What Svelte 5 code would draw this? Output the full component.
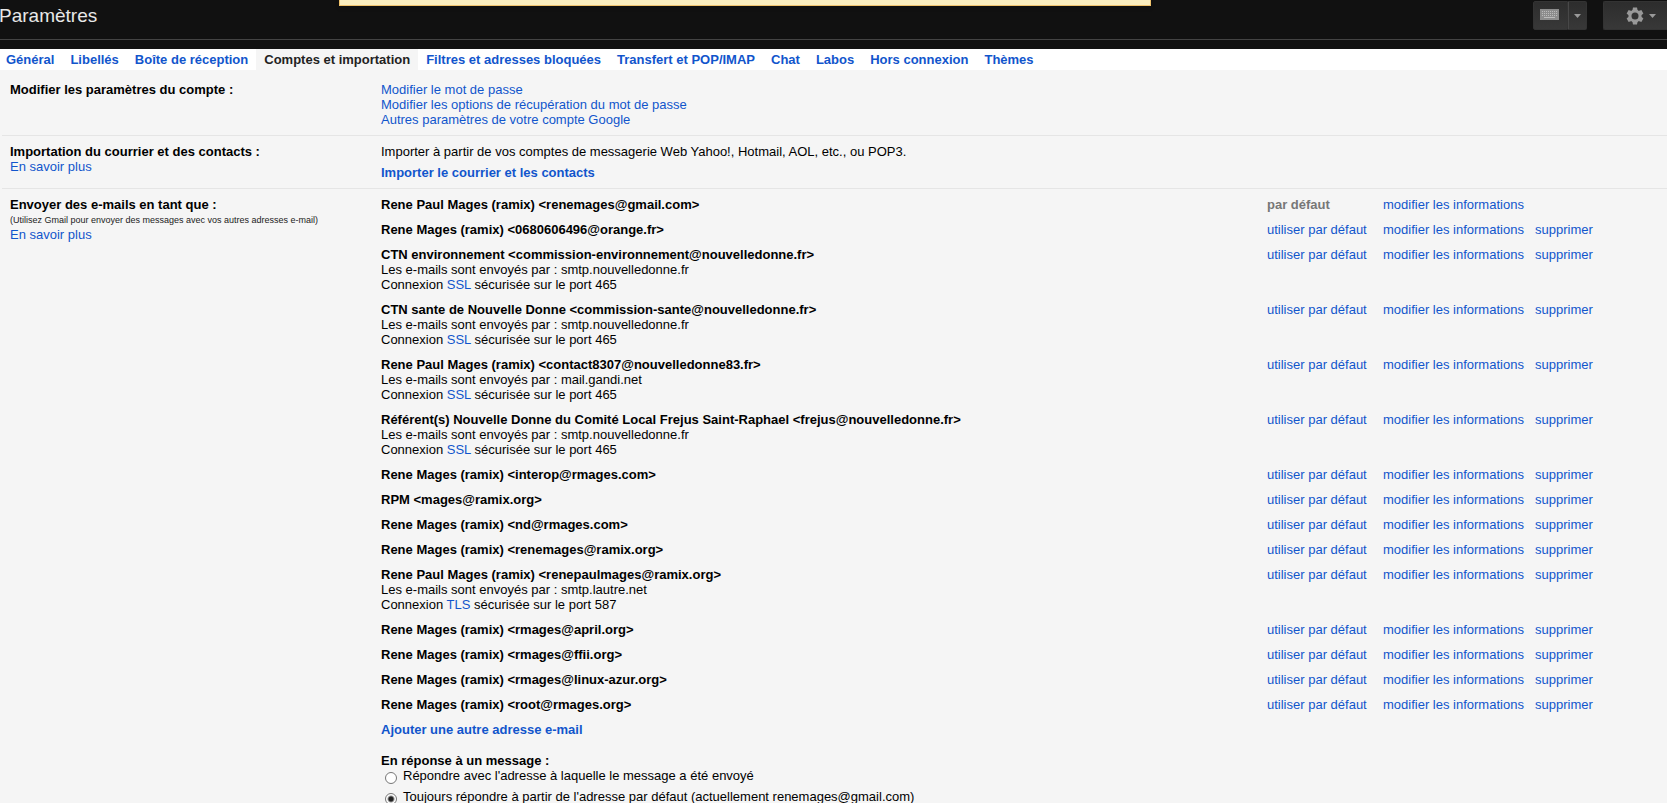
<script lang="ts">
  type Sender = { name: string; server?: string; security?: string; port?: number };

  const tabs = [
    'Général',
    'Libellés',
    'Boîte de réception',
    'Comptes et importation',
    'Filtres et adresses bloquées',
    'Transfert et POP/IMAP',
    'Chat',
    'Labos',
    'Hors connexion',
    'Thèmes',
  ];

  const senders: Sender[] = [
    { name: 'Rene Paul Mages (ramix) <renemages@gmail.com>' },
    { name: 'Rene Mages (ramix) <0680606496@orange.fr>' },
    { name: 'CTN environnement <commission-environnement@nouvelledonne.fr>', server: 'smtp.nouvelledonne.fr', security: 'SSL', port: 465 },
    { name: 'CTN sante de Nouvelle Donne <commission-sante@nouvelledonne.fr>', server: 'smtp.nouvelledonne.fr', security: 'SSL', port: 465 },
    { name: 'Rene Paul Mages (ramix) <contact8307@nouvelledonne83.fr>', server: 'mail.gandi.net', security: 'SSL', port: 465 },
    { name: 'Référent(s) Nouvelle Donne du Comité Local Frejus Saint-Raphael <frejus@nouvelledonne.fr>', server: 'smtp.nouvelledonne.fr', security: 'SSL', port: 465 },
    { name: 'Rene Mages (ramix) <interop@rmages.com>' },
    { name: 'RPM <mages@ramix.org>' },
    { name: 'Rene Mages (ramix) <nd@rmages.com>' },
    { name: 'Rene Mages (ramix) <renemages@ramix.org>' },
    { name: 'Rene Paul Mages (ramix) <renepaulmages@ramix.org>', server: 'smtp.lautre.net', security: 'TLS', port: 587 },
    { name: 'Rene Mages (ramix) <rmages@april.org>' },
    { name: 'Rene Mages (ramix) <rmages@ffii.org>' },
    { name: 'Rene Mages (ramix) <rmages@linux-azur.org>' },
    { name: 'Rene Mages (ramix) <root@rmages.org>' },
  ];

  let activeTab = $state('Comptes et importation');
  let defaultIndex = $state(0);
  let replyMode = $state('default');

  const keyRows = [0, 1, 2];
  const keyCols = [0, 1, 2, 3, 4, 5, 6, 7];
</script>

<div class="page">
  <header>
    <div class="bar">
      <h1>Paramètres</h1>
      <div class="tools">
        <div class="split">
          <button class="keyboard" aria-label="Outils de saisie">
            <svg width="19" height="11" viewBox="0 0 19 11" shape-rendering="crispEdges">
              <rect width="19" height="11" fill="#8c8c8c" />
              {#each keyRows as r (r)}
                {#each keyCols as c (c)}
                  <rect x={2 + c * 2} y={2 + r * 2} width="1" height="1" fill="#bbb" />
                {/each}
              {/each}
              <rect x="4" y="8" width="11" height="1" fill="#bbb" />
            </svg>
          </button>
          <button class="more" aria-label="Choisir la saisie">
            <svg width="7" height="4" viewBox="0 0 7 4"><path d="M0 0h7L3.5 4z" fill="#999" /></svg>
          </button>
        </div>
        <button class="settings" aria-label="Paramètres">
          <svg width="18" height="18" viewBox="0 0 18 18">
            <g fill="#999">
              {#each [0, 60, 120] as angle (angle)}
                <path d="M7 .5h4l.6 3v11l-.6 3H7l-.6-3v-11z" transform="rotate({angle} 9 9)" />
              {/each}
            </g>
            <circle cx="9" cy="9" r="5" fill="none" stroke="#999" stroke-width="3" />
            <circle cx="9" cy="9" r="3.5" fill="#333" />
          </svg>
          <svg width="7" height="4" viewBox="0 0 7 4"><path d="M0 0h7L3.5 4z" fill="#999" /></svg>
        </button>
      </div>
    </div>
    <div class="notice"></div>
  </header>

  <nav>
    {#each tabs as tab (tab)}
      <a href="#settings" class:active={tab === activeTab} onclick={() => (activeTab = tab)}>{tab}</a>
    {/each}
  </nav>

  <main>
    <section class="first">
      <h2>Modifier les paramètres du compte :</h2>
      <div class="content">
        <div><a href="#password">Modifier le mot de passe</a></div>
        <div><a href="#recovery">Modifier les options de récupération du mot de passe</a></div>
        <div><a href="#account">Autres paramètres de votre compte Google</a></div>
      </div>
    </section>

    <section>
      <div class="label">
        <h2>Importation du courrier et des contacts :</h2>
        <a href="#help-import">En savoir plus</a>
      </div>
      <div class="content import">
        <div>Importer à partir de vos comptes de messagerie Web Yahoo!, Hotmail, AOL, etc., ou POP3.</div>
        <a class="strong" href="#import">Importer le courrier et les contacts</a>
      </div>
    </section>

    <section>
      <div class="label">
        <h2>Envoyer des e-mails en tant que :</h2>
        <div class="hint">(Utilisez Gmail pour envoyer des messages avec vos autres adresses e-mail)</div>
        <a href="#help-send">En savoir plus</a>
      </div>
      <div class="content">
        <table>
          <colgroup>
            <col />
            <col class="col-default" />
            <col class="col-edit" />
            <col class="col-delete" />
          </colgroup>
          <tbody>
            {#each senders as sender, i (sender.name)}
              <tr>
                <td>
                  <b>{sender.name}</b>
                  {#if sender.server}
                    <div>Les e-mails sont envoyés par : {sender.server}</div>
                    <div>Connexion <a href="#security">{sender.security}</a> sécurisée sur le port {sender.port}</div>
                  {/if}
                </td>
                <td>
                  {#if i === defaultIndex}
                    <b class="current">par défaut</b>
                  {:else}
                    <a href="#default" onclick={() => (defaultIndex = i)}>utiliser par défaut</a>
                  {/if}
                </td>
                <td><a href="#edit">modifier les informations</a></td>
                <td>{#if i > 0}<a href="#delete">supprimer</a>{/if}</td>
              </tr>
            {/each}
          </tbody>
        </table>
        <a class="strong" href="#add">Ajouter une autre adresse e-mail</a>

        <fieldset>
          <legend>En réponse à un message :</legend>
          <label>
            <input type="radio" name="reply" value="same" bind:group={replyMode} />
            <span>Répondre avec l'adresse à laquelle le message a été envoyé</span>
          </label>
          <label>
            <input type="radio" name="reply" value="default" bind:group={replyMode} />
            <span>Toujours répondre à partir de l'adresse par défaut (actuellement renemages@gmail.com)</span>
          </label>
        </fieldset>
      </div>
    </section>
  </main>
</div>

<style>
  :global(body) { margin: 0; background: #f5f5f5; }
  .page {
    height: 100vh; overflow: hidden;
    font: 13px/15px 'Liberation Sans', Arial, sans-serif;
    color: #000; background: #f5f5f5;
  }
  a { color: #15c; text-decoration: none; }
  h1, h2 { margin: 0; font-weight: normal; }
  h2 { font-size: 13px; line-height: 15px; font-weight: bold; }

  header { position: relative; height: 49px; background: #111; }
  .bar {
    display: flex; justify-content: space-between; align-items: flex-start;
    height: 39px; border-bottom: 1px solid #444;
  }
  h1 { margin-left: -1px; font-size: 19px; line-height: 32px; color: #e8e8e8; }
  .notice {
    position: absolute; top: 0; left: 339px; right: 516px; height: 5px;
    background: #f9edbe; border: 1px solid #f0c36d; border-top: 0;
    box-shadow: 0 2px 4px rgba(0, 0, 0, 0.2);
  }
  .tools { display: flex; gap: 16px; padding-top: 1px; }
  .split { display: flex; }
  button {
    display: flex; align-items: center; justify-content: center; box-sizing: border-box;
    height: 29px; margin: 0; padding: 0;
    background: linear-gradient(#2d2d2d, #383838); border: 1px solid #333;
  }
  .keyboard { width: 35px; border-radius: 2px 0 0 2px; padding-bottom: 2px; padding-right: 3px; }
  .more { width: 19px; padding-right: 1px; border-left-color: #484848; border-radius: 0 2px 2px 0; }
  .settings { width: 64px; gap: 5px; padding-left: 10px; border-right: 0; border-radius: 2px 0 0 2px; }

  nav { display: flex; height: 21px; margin-left: -2px; background: #fff; }
  nav a { padding: 3px 8px; font-weight: bold; white-space: nowrap; }
  nav a.active { color: #222; background: #f5f5f5; }

  main { margin-left: 2px; }
  section { display: flex; padding: 8px 0 8px 8px; border-bottom: 1px solid #e5e5e5; }
  .first { padding-top: 12px; }
  section > :first-child { flex: 0 0 371px; }
  .content { flex: 1; }
  .import { display: flex; flex-direction: column; gap: 6px; }
  .strong { font-weight: bold; }
  .hint { font-size: 9px; color: #222; padding-top: 2px; line-height: 13px; }

  table { width: 100%; table-layout: fixed; border-collapse: collapse; }
  td { padding: 0 0 10px; vertical-align: top; white-space: nowrap; }
  .col-default { width: 116px; }
  .col-edit { width: 152px; }
  .col-delete { width: 132px; }
  .current { color: #777; }

  fieldset { margin: 16px 0 0; padding: 0; border: 0; }
  legend { padding: 0; font-weight: bold; }
  label { display: flex; gap: 6px; height: 21px; padding-left: 4px; }
  input {
    appearance: none; flex: none; box-sizing: border-box; width: 12px; height: 12px; margin: 4px 0 0;
    border: 1px solid #777; border-radius: 50%; background: #fff;
  }
  input:checked { background: radial-gradient(circle, #222 0 2px, #fff 4px); }
</style>
